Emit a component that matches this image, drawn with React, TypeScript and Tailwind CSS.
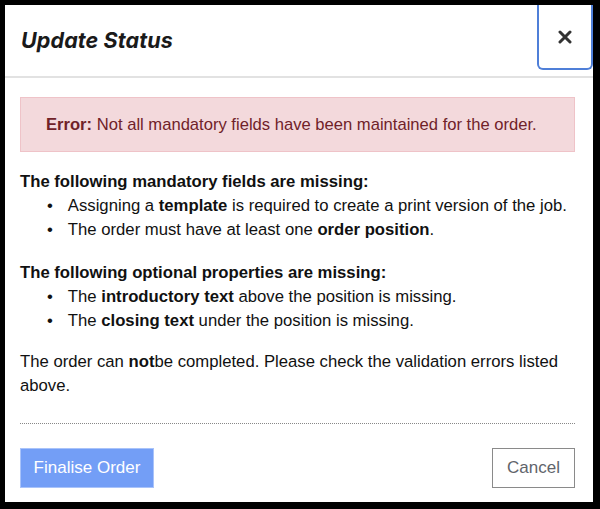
import React from 'react';

export default function App() {
  return (
    <div className="w-[600px] h-[509px] bg-black pl-[5px] pt-[5px]" style={{ fontFamily: '"Liberation Sans", Arial, sans-serif' }}>
      <div className="w-[588px] h-[497px] bg-white flex flex-col">
        {/* Header */}
        <div className="h-[73px] border-b-2 border-[#e2e2e2] flex items-start justify-between">
          <h1
            className="pl-4 pt-[21px] text-[21.5px] leading-[28px] font-bold italic text-[#1a1a1a] tracking-[0.1px]"
            style={{ fontFamily: 'Inter, "DejaVu Sans", sans-serif' }}
          >
            Update Status
          </h1>
          <button className="w-[56px] h-[65px] border-2 border-t-0 border-[#4f7fd8] rounded-b-md flex items-center justify-center">
            <svg width="14" height="14" viewBox="0 0 14 14">
              <path d="M2 2L12 12M12 2L2 12" stroke="#333" strokeWidth="3" strokeLinecap="round" />
            </svg>
          </button>
        </div>

        {/* Body */}
        <div className="pl-[15px] pr-[18px] pt-[19px] text-[16.7px] leading-[24px] text-[#111]">
          <div className="h-[55px] bg-[#f3d9dc] border border-[#efc3c8] flex items-center pl-[25px] text-[#702229] text-[16.6px]">
            <span><b>Error:</b> Not all mandatory fields have been maintained for the order.</span>
          </div>

          <p className="mt-[18px] font-bold">The following mandatory fields are missing:</p>
          <ul className="pl-[27px]">
            <li className="flex gap-[15px]"><span>•</span><span>Assigning a <b>template</b> is required to create a print version of the job.</span></li>
            <li className="flex gap-[15px]"><span>•</span><span>The order must have at least one <b>order position</b>.</span></li>
          </ul>

          <p className="mt-[19px] font-bold">The following optional properties are missing:</p>
          <ul className="pl-[27px]">
            <li className="flex gap-[15px]"><span>•</span><span>The <b>introductory text</b> above the position is missing.</span></li>
            <li className="flex gap-[15px]"><span>•</span><span>The <b>closing text</b> under the position is missing.</span></li>
          </ul>

          <p className="mt-[17px]">
            The order can <b>not</b>be completed. Please check the validation errors listed above.
          </p>

          <div className="mt-[25px] border-t border-dotted border-[#888]" />

          <div className="mt-[24px] flex justify-between">
            <button className="w-[134px] h-[40px] bg-[#739ef6] border border-[#a9c3fa] text-white text-[17px]">
              Finalise Order
            </button>
            <button className="w-[83px] h-[40px] border border-[#8a8a8a] text-[#5f646b] text-[17px]">
              Cancel
            </button>
          </div>
        </div>
      </div>
    </div>
  );
}
